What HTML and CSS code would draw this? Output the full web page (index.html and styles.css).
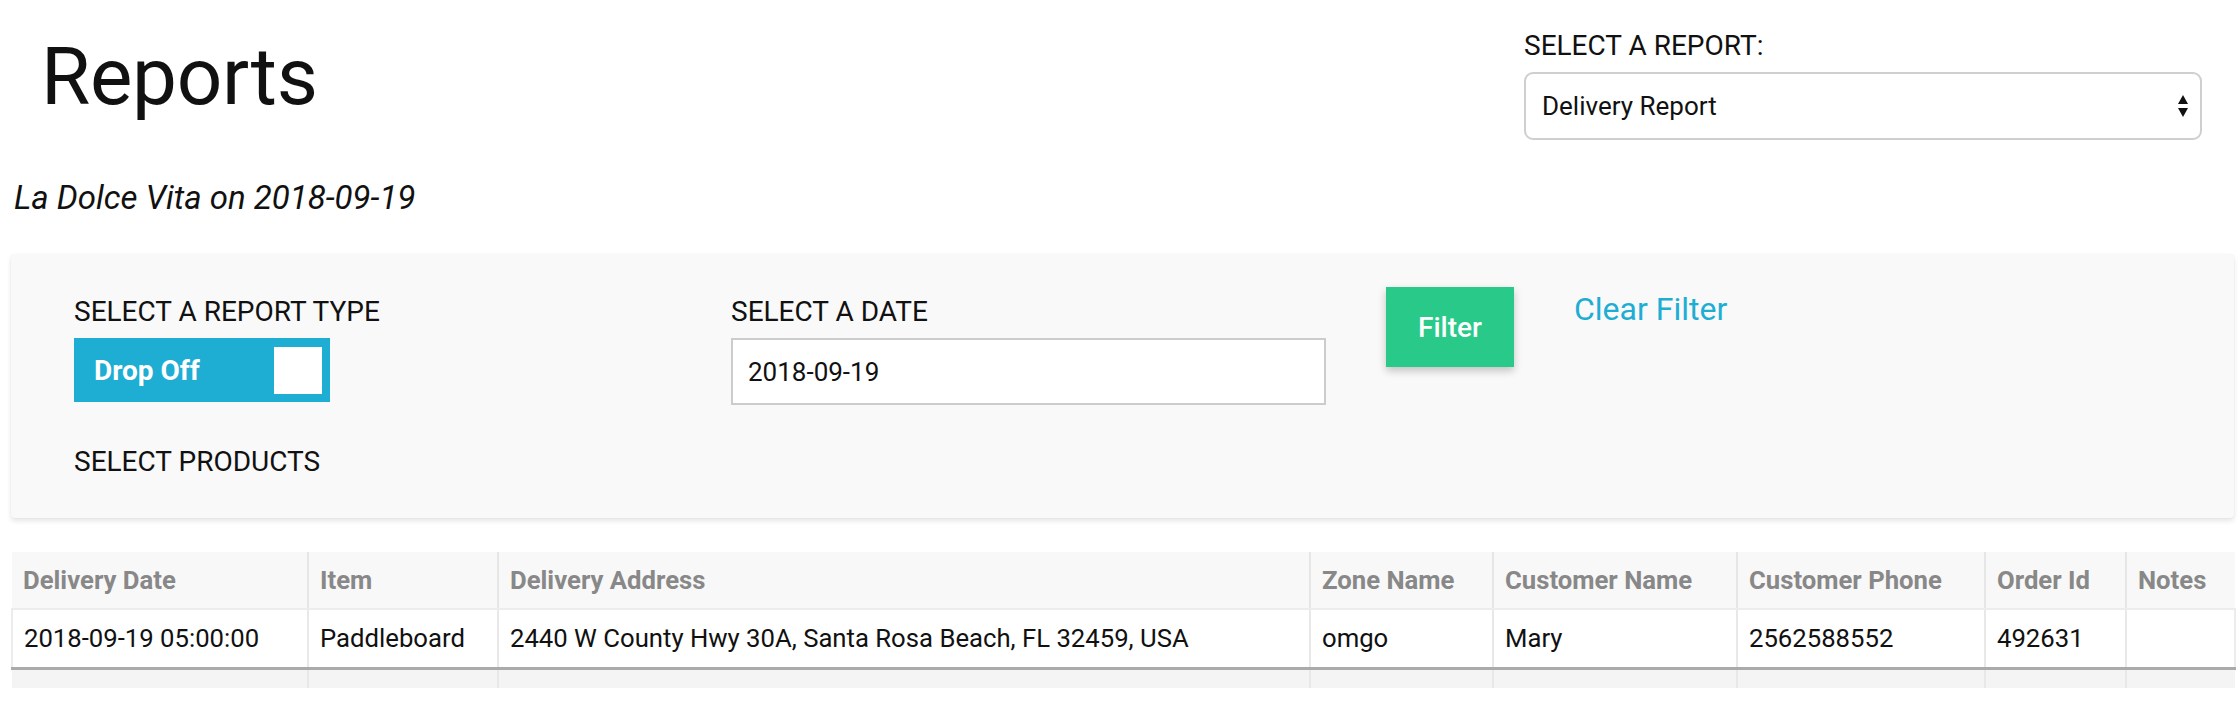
FILE: index.html
```html
<!DOCTYPE html>
<html lang="en">
<head>
<meta charset="utf-8">
<title>Reports</title>
<link rel="stylesheet" href="styles.css">
</head>
<body>
<div class="page">
  <header class="top">
    <h1 class="title">Reports</h1>
    <div class="report-pick">
      <div class="label">SELECT A REPORT:</div>
      <div class="select">
        <span>Delivery Report</span>
        <svg class="arrows" width="10" height="22" viewBox="0 0 10 22"><path d="M5 0 L10 9 L0 9 Z M0 13 L10 13 L5 22 Z" fill="#111"/></svg>
      </div>
    </div>
  </header>

  <p class="subtitle">La Dolce Vita on 2018-09-19</p>

  <section class="panel">
    <div class="col col-type">
      <div class="label">SELECT A REPORT TYPE</div>
      <div class="toggle"><span>Drop Off</span><span class="knob"></span></div>
      <div class="label products">SELECT PRODUCTS</div>
    </div>
    <div class="col col-date">
      <div class="label">SELECT A DATE</div>
      <div class="date-input">2018-09-19</div>
    </div>
    <button class="filter-btn">Filter</button>
    <a class="clear">Clear Filter</a>
  </section>

  <table class="grid">
    <colgroup>
      <col class="c1"><col class="c2"><col class="c3"><col class="c4"><col class="c5"><col class="c6"><col class="c7"><col class="c8">
    </colgroup>
    <thead>
      <tr><th>Delivery Date</th><th>Item</th><th>Delivery Address</th><th>Zone Name</th><th>Customer Name</th><th>Customer Phone</th><th>Order Id</th><th>Notes</th></tr>
    </thead>
    <tbody>
      <tr><td>2018-09-19 05:00:00</td><td>Paddleboard</td><td>2440 W County Hwy 30A, Santa Rosa Beach, FL 32459, USA</td><td>omgo</td><td>Mary</td><td>2562588552</td><td>492631</td><td></td></tr>
      <tr class="stripe"><td></td><td></td><td></td><td></td><td></td><td></td><td></td><td></td></tr>
    </tbody>
  </table>
</div>
</body>
</html>
```

FILE: styles.css
```css
* { box-sizing: border-box; }
html, body { margin: 0; padding: 0; background: #fff; }
body { font-family: Roboto, "Liberation Sans", sans-serif; color: #111; }

.page { padding: 0 4px 0 11px; }

.top {
  display: flex;
  justify-content: space-between;
  align-items: flex-start;
  padding: 0 32px 0 30px;
}
.title {
  margin: 37px 0 0 0;
  font-size: 80px;
  font-weight: 400;
  line-height: 80px;
  letter-spacing: -0.3px;
}
.report-pick { width: 678px; margin-top: 30px; }
.label { font-size: 28px; line-height: 32px; color: #111; }
.select {
  margin-top: 10px;
  height: 68px;
  border: 2px solid #cfcfcf;
  border-radius: 9px;
  display: flex;
  align-items: center;
  justify-content: space-between;
  padding: 0 12px 0 16px;
  font-size: 26px;
}

.subtitle {
  margin: 39px 0 0 3px;
  font-size: 33px;
  line-height: 38px;
  font-style: italic;
}

.panel {
  margin-top: 37px;
  background: #f9f9f9;
  border-radius: 4px;
  box-shadow: 0 3px 5px rgba(0,0,0,0.10), 0 0 2px rgba(0,0,0,0.05);
  display: flex;
  align-items: flex-start;
  padding: 33px 0 40px 63px;
}
.col { display: flex; flex-direction: column; }
.col .label { margin-top: 9px; }
.col-type { width: 657px; }
.col-date { width: 595px; }
.toggle {
  margin-top: 10px;
  width: 256px;
  height: 64px;
  background: #1eadd3;
  color: #fff;
  font-weight: 700;
  font-size: 28px;
  display: flex;
  align-items: center;
  justify-content: space-between;
  padding: 0 8px 0 20px;
}
.knob { width: 48px; height: 47px; background: #fff; }
.label.products { margin-top: 44px; }
.date-input {
  margin-top: 10px;
  height: 67px;
  border: 2px solid #cccccc;
  background: #fff;
  font-size: 26px;
  display: flex;
  align-items: center;
  padding: 0 15px;
}
.filter-btn {
  margin-left: 60px;
  width: 128px;
  height: 80px;
  border: 0;
  background: #29c98a;
  color: #fff;
  font-family: Roboto, "Liberation Sans", sans-serif;
  font-size: 28px;
  font-weight: 500;
  box-shadow: 0 4px 8px rgba(0,0,0,0.22);
}
.clear {
  margin-left: 60px;
  margin-top: 3px;
  font-size: 32px;
  line-height: 38px;
  color: #1eadd3;
}

.grid {
  margin-top: 34px;
  width: 2223px;
  border-collapse: collapse;
  table-layout: fixed;
  font-size: 25.7px;
}
.c1 { width: 296px; } .c2 { width: 190px; } .c3 { width: 812px; } .c4 { width: 183px; }
.c5 { width: 244px; } .c6 { width: 248px; } .c7 { width: 141px; } .c8 { width: 109px; }
.grid th {
  background: #f8f8f8;
  color: #888;
  font-weight: 700;
  text-align: left;
  height: 57px;
  padding: 0 11px;
  border-left: 2px solid #e6e6e6;
  border-bottom: 2px solid #ececec;
}
.grid th:first-child, .grid td:first-child { border-left: 0; }
.grid td {
  height: 59px;
  padding: 0 11px;
  color: #111;
  background: #fff;
  border-left: 2px solid #e8e8e8;
  border-bottom: 3px solid #aaa;
}
.grid tbody tr:first-child { border-left: 2px solid #ececec; border-right: 2px solid #ececec; }
.grid tr.stripe td {
  height: 20px;
  background: #f4f4f4;
  border-bottom: 0;
}
```
